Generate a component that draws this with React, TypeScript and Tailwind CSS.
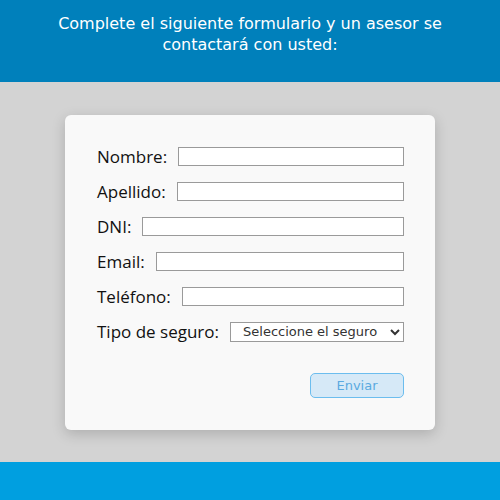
import React from 'react';

const FIELDS = [
  { id: 'nombre', label: 'Nombre:' },
  { id: 'apellido', label: 'Apellido:' },
  { id: 'dni', label: 'DNI:' },
  { id: 'email', label: 'Email:' },
  { id: 'telefono', label: 'Teléfono:' },
];

const App: React.FC = () => {
  return (
    <div className="w-[500px] h-[500px] flex flex-col bg-[#d3d3d3]">
      {/* Header */}
      <div className="h-[82px] shrink-0 bg-[#0080bb] pt-[13px] px-8 text-center text-white text-[16px] leading-[21px] font-['DejaVu_Sans',sans-serif]">
        Complete el siguiente formulario y un asesor se contactará con usted:
      </div>

      {/* Form */}
      <div className="flex-1 flex justify-center pt-[33px]">
        <div className="w-[370px] h-[315px] bg-[#f9f9f9] rounded-md shadow-[0_4px_14px_rgba(0,0,0,0.18)] pt-[32px] pl-[32px] pr-[31px] flex flex-col gap-4 font-['Open_Sans',sans-serif] text-[17px] text-[#111]">
          {FIELDS.map((f) => (
            <div key={f.id} className="flex items-center h-[19px] gap-[11px]">
              <label htmlFor={f.id} className="leading-none">{f.label}</label>
              <input
                id={f.id}
                className="flex-1 h-[19px] bg-white border border-[#9a9a9a]"
              />
            </div>
          ))}
          <div className="flex items-center h-[19px] gap-[11px]">
            <label htmlFor="tipo" className="leading-none">Tipo de seguro:</label>
            <select
              id="tipo"
              className="flex-1 h-[20px] bg-white border border-[#9a9a9a] text-[13px] text-[#333] font-['DejaVu_Sans',sans-serif] pl-[8px]"
            >
              <option>Seleccione el seguro</option>
            </select>
          </div>
          <div className="flex justify-end mt-4">
            <button className="w-[94px] h-[25px] rounded-[5px] bg-[#d6e9f7] border border-[#6cbdee] text-[#5aa9e0] text-[13px] font-['DejaVu_Sans',sans-serif]">
              Enviar
            </button>
          </div>
        </div>
      </div>

      {/* Footer */}
      <div className="h-[38px] shrink-0 bg-[#009fe0]" />
    </div>
  );
};

export default App;
